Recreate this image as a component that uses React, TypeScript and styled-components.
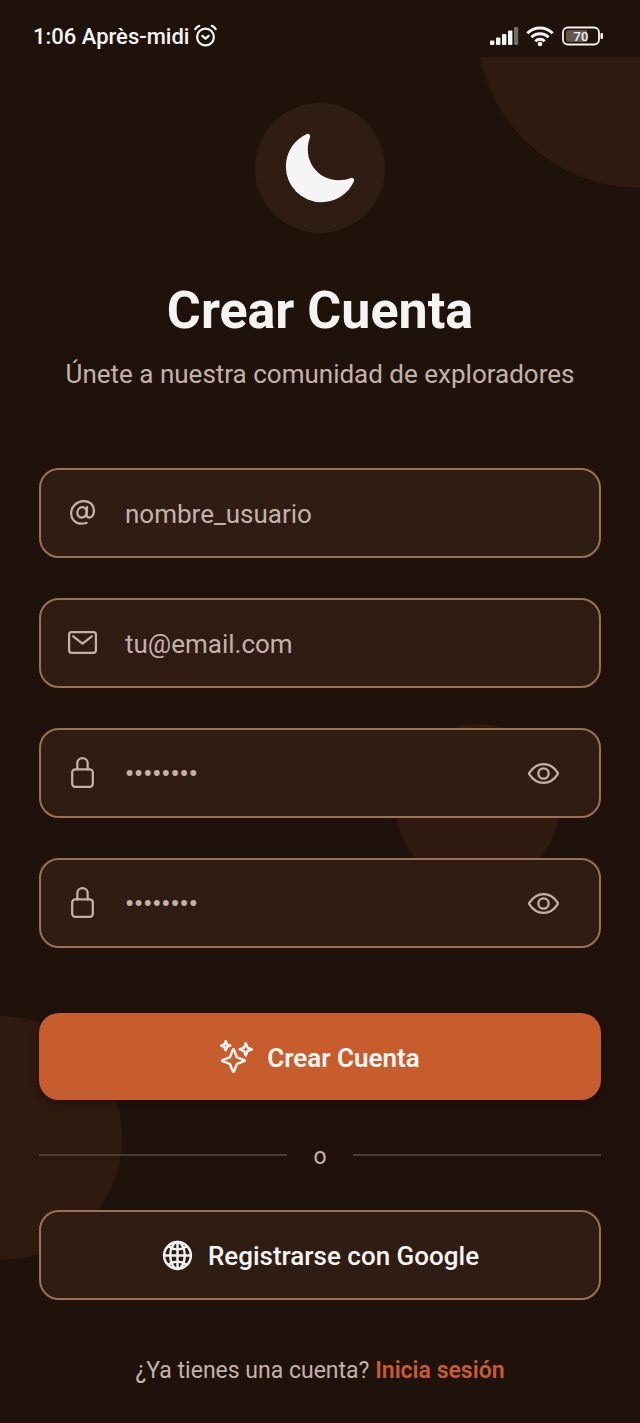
import React, { useId, useState } from "react";
import styled, { createGlobalStyle } from "styled-components";
import {
  IoAtOutline,
  IoEyeOffOutline,
  IoEyeOutline,
  IoGlobeOutline,
  IoLockClosedOutline,
  IoMailOutline,
  IoMoon,
  IoSparklesOutline,
} from "react-icons/io5";

const color = {
  background: "#1f120b",
  surface: "#2f1c13",
  glow: "#2f1a10",
  border: "#9c7152",
  accent: "#c75d2c",
  text: "#f6f4f2",
  muted: "#c4b2a9",
  divider: "#4b3c33",
};

const GlobalStyle = createGlobalStyle`
  *, *::before, *::after { box-sizing: border-box; }
  body {
    margin: 0;
    background: ${color.background};
    color: ${color.text};
    font-family: Roboto, "Liberation Sans", sans-serif;
  }
`;

const Page = styled.div`
  display: flex;
  flex-direction: column;
  min-height: 100vh;
`;

const StatusBar = styled.header`
  display: flex;
  align-items: center;
  justify-content: space-between;
  height: 57px;
  padding: 16px 36px 0 33px;
  font-size: 22px;
  font-weight: 500;
  line-height: 26px;
`;

const StatusGroup = styled.div<{ $gap: number }>`
  display: flex;
  align-items: center;
  gap: ${(p) => p.$gap}px;

  svg {
    display: block;
    overflow: visible;
  }
`;

const Screen = styled.main`
  position: relative;
  z-index: 0;
  display: flex;
  flex: 1;
  flex-direction: column;
  overflow: hidden;
  padding: 46px 39px 37px;
`;

const Bubble = styled.span<{
  $size: number;
  $top?: number;
  $right?: number;
  $bottom?: number;
  $left?: number;
}>`
  position: absolute;
  z-index: -1;
  top: ${(p) => (p.$top === undefined ? "auto" : `${p.$top}px`)};
  right: ${(p) => (p.$right === undefined ? "auto" : `${p.$right}px`)};
  bottom: ${(p) => (p.$bottom === undefined ? "auto" : `${p.$bottom}px`)};
  left: ${(p) => (p.$left === undefined ? "auto" : `${p.$left}px`)};
  width: ${(p) => p.$size}px;
  height: ${(p) => p.$size}px;
  border-radius: 50%;
  background: ${color.glow};
`;

const Intro = styled.div`
  display: flex;
  flex-direction: column;
  align-items: center;
  text-align: center;
`;

const Emblem = styled.div`
  display: grid;
  place-items: center;
  width: 130px;
  height: 130px;
  border-radius: 50%;
  background: ${color.surface};
`;

const Title = styled.h1`
  margin: 47px 0 0;
  font-size: 52px;
  font-weight: 700;
  line-height: 62px;
`;

const Subtitle = styled.p`
  margin: 16px 0 0;
  color: ${color.muted};
  font-size: 26px;
  line-height: 32px;
`;

const Form = styled.form`
  display: flex;
  flex-direction: column;
  margin-top: 78px;
`;

const Fields = styled.div`
  display: flex;
  flex-direction: column;
  gap: 40px;
`;

const Field = styled.div`
  display: flex;
  align-items: center;
  height: 90px;
  padding: 0 39px 0 25px;
  border: 2px solid ${color.border};
  border-radius: 20px;
  background: ${color.surface};
  color: ${color.muted};
`;

const FieldIcon = styled.label`
  display: block;
  height: 34px;

  svg {
    display: block;
  }

  path,
  rect {
    stroke-width: 35px;
  }
`;

const Input = styled.input`
  flex: 1;
  min-width: 0;
  height: 100%;
  margin-left: 26px;
  padding: 2px 0 0;
  border: 0;
  outline: 0;
  background: transparent;
  color: ${color.text};
  font: 400 26px/32px Roboto, "Liberation Sans", sans-serif;

  &::placeholder {
    color: ${color.muted};
    opacity: 1;
  }

  &[type="password"]::placeholder {
    font-weight: 500;
  }
`;

const IconButton = styled.button`
  display: block;
  height: 34px;
  padding: 0;
  border: 0;
  background: none;
  color: inherit;
  cursor: pointer;

  svg {
    display: block;
  }

  path,
  circle {
    stroke-width: 35px;
  }
`;

const Action = styled.button<{ $primary?: boolean }>`
  display: flex;
  align-items: center;
  justify-content: center;
  gap: 14px;
  width: 100%;
  height: ${(p) => (p.$primary ? 87 : 90)}px;
  padding: 0;
  border: ${(p) => (p.$primary ? "0" : `2px solid ${color.border}`)};
  border-radius: 20px;
  background: ${(p) => (p.$primary ? color.accent : color.surface)};
  box-shadow: ${(p) => (p.$primary ? "0 4px 10px rgba(0, 0, 0, 0.3)" : "none")};
  color: ${color.text};
  font: ${(p) => (p.$primary ? 600 : 500)} 26px/32px Roboto, "Liberation Sans", sans-serif;
  cursor: pointer;

  svg path {
    stroke-width: 38px;
  }
`;

const ActionLabel = styled.span`
  padding-top: 2px;
`;

const SubmitRow = styled.div`
  margin-top: 65px;
`;

const Divider = styled.div`
  display: flex;
  align-items: center;
  gap: 26px;
  margin: 39px 0;
  color: ${color.muted};
  font-size: 23px;
  line-height: 28px;

  &::before,
  &::after {
    content: "";
    flex: 1;
    height: 2px;
    background: ${color.divider};
  }
`;

const DividerText = styled.span`
  padding-top: 4px;
`;

const Footer = styled.p`
  margin: 55px 0 0;
  color: ${color.muted};
  font-size: 23px;
  line-height: 32px;
  text-align: center;
`;

const LoginLink = styled.a`
  color: ${color.accent};
  font-weight: 600;
  text-decoration: none;
`;

const AlarmIcon = () => (
  <svg width="24" height="24" viewBox="0 1 24 24" fill="none" stroke="currentColor" strokeWidth="2.2" strokeLinecap="round" strokeLinejoin="round" aria-hidden="true">
    <circle cx="11.5" cy="13" r="8.4" />
    <path d="M1.300 5.200C2.300 3.600 3.700 2.500 5.300 1.800M21.700 5.200C20.700 3.600 19.300 2.500 17.700 1.800" />
    <path d="M8.300 11.800l3.200 2.800 3.200-2.800" />
  </svg>
);

const SignalIcon = () => (
  <svg width="28" height="20" viewBox="0 1 28 20" fill="currentColor" aria-hidden="true">
    <rect x="0" y="14.5" width="4.400" height="4.5" rx="1" />
    <rect x="6" y="11.5" width="4.400" height="7.5" rx="1" />
    <rect x="12" y="8" width="4.400" height="11" rx="1" />
    <rect x="18" y="4.5" width="4.400" height="14.5" rx="1" />
    <rect x="24" y="1" width="4.200" height="18" rx="1" opacity="0.4" />
  </svg>
);

const WifiIcon = () => (
  <svg width="28" height="22" viewBox="0 1 28 22" fill="none" stroke="currentColor" strokeWidth="2.9" aria-hidden="true">
    <path d="M1.3 8.2a18 18 0 0 1 25.4 0" />
    <path d="M5.4 12.3a12.2 12.2 0 0 1 17.2 0" />
    <path d="M9.3 16.2a6.7 6.7 0 0 1 9.4 0" />
    <circle cx="14" cy="19" r="2.3" fill="currentColor" stroke="none" />
  </svg>
);

const BatteryIcon = () => (
  <svg width="42" height="20" viewBox="0 1 42 20" aria-label="Batería 70">
    <rect x="1" y="1.5" width="36" height="17" rx="5" fill="none" stroke="currentColor" strokeWidth="1.8" />
    <path d="M7 4h18v12H7a3 3 0 0 1-3-3V7a3 3 0 0 1 3-3Z" fill="#66564e" />
    <rect x="38.500" y="7" width="2.5" height="6" rx="1" fill="currentColor" />
    <text x="19" y="14.800" textAnchor="middle" fontFamily="Roboto, sans-serif" fontSize="13" fontWeight="500" fill="currentColor">70</text>
  </svg>
);

type FieldRowProps = {
  icon: React.ReactNode;
  name: string;
  label: string;
  placeholder: string;
  type?: string;
};

function FieldRow({ icon, name, label, placeholder, type = "text" }: FieldRowProps) {
  const id = useId();
  const [visible, setVisible] = useState(false);
  const secret = type === "password";
  return (
    <Field>
      <FieldIcon htmlFor={id} aria-label={label}>{icon}</FieldIcon>
      <Input id={id} name={name} type={secret && visible ? "text" : type} placeholder={placeholder} />
      {secret && (
        <IconButton
          type="button"
          aria-label={visible ? "Ocultar contraseña" : "Mostrar contraseña"}
          onClick={() => setVisible(!visible)}
        >
          {visible ? <IoEyeOffOutline size={33} /> : <IoEyeOutline size={33} />}
        </IconButton>
      )}
    </Field>
  );
}

export default function App() {
  return (
    <>
      <GlobalStyle />
      <Page>
        <StatusBar>
          <StatusGroup $gap={5}>
            <span>1:06 Après-midi</span>
            <AlarmIcon />
          </StatusGroup>
          <StatusGroup $gap={8}>
            <SignalIcon />
            <WifiIcon />
            <BatteryIcon />
          </StatusGroup>
        </StatusBar>
        <Screen>
          <Bubble $size={326} $top={-195} $right={-163} />
          <Bubble $size={163} $top={667} $right={81} />
          <Bubble $size={244} $bottom={164} $left={-122} />
          <Intro>
            <Emblem>
              <IoMoon size={78} color="#f5f5f5" />
            </Emblem>
            <Title>Crear Cuenta</Title>
            <Subtitle>Únete a nuestra comunidad de exploradores</Subtitle>
          </Intro>
          <Form onSubmit={(event) => event.preventDefault()}>
            <Fields>
              <FieldRow icon={<IoAtOutline size={33} />} name="usuario" label="Nombre de usuario" placeholder="nombre_usuario" />
              <FieldRow icon={<IoMailOutline size={33} />} name="email" label="Correo electrónico" placeholder="tu@email.com" type="email" />
              <FieldRow icon={<IoLockClosedOutline size={33} />} name="clave" label="Contraseña" placeholder="••••••••" type="password" />
              <FieldRow icon={<IoLockClosedOutline size={33} />} name="confirmacion" label="Confirmar contraseña" placeholder="••••••••" type="password" />
            </Fields>
            <SubmitRow>
              <Action type="submit" $primary>
                <IoSparklesOutline size={33} />
                <ActionLabel>Crear Cuenta</ActionLabel>
              </Action>
            </SubmitRow>
            <Divider>
              <DividerText>o</DividerText>
            </Divider>
            <Action type="button">
              <IoGlobeOutline size={33} />
              <ActionLabel>Registrarse con Google</ActionLabel>
            </Action>
          </Form>
          <Footer>
            ¿Ya tienes una cuenta? <LoginLink href="#login">Inicia sesión</LoginLink>
          </Footer>
        </Screen>
      </Page>
    </>
  );
}
